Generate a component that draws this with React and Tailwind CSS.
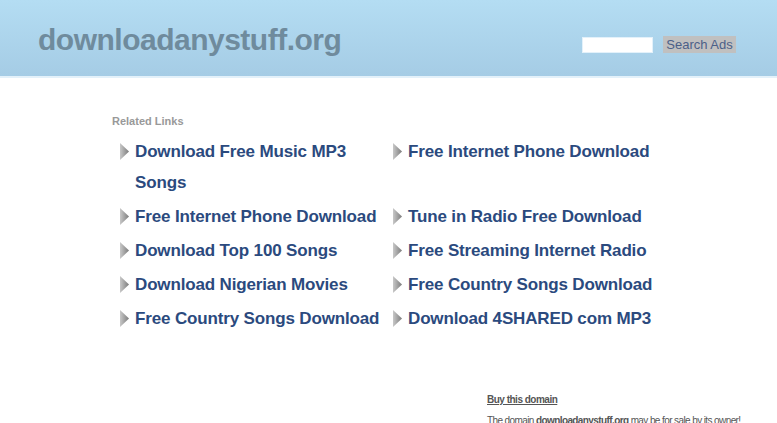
const left = [
  'Download Free Music MP3 Songs',
  'Free Internet Phone Download',
  'Download Top 100 Songs',
  'Download Nigerian Movies',
  'Free Country Songs Download',
];
const right = [
  'Free Internet Phone Download',
  'Tune in Radio Free Download',
  'Free Streaming Internet Radio',
  'Free Country Songs Download',
  'Download 4SHARED com MP3',
];

function Arrow() {
  return (
    <svg width="11" height="17" viewBox="0 0 11 17" className="shrink-0 mt-[7px]">
      <defs>
        <linearGradient id="ag" x1="0" y1="0" x2="1" y2="0">
          <stop offset="0" stopColor="#c8c8c8" />
          <stop offset="1" stopColor="#7c7c7c" />
        </linearGradient>
      </defs>
      <polygon points="1,0 10,8.5 1,17" fill="url(#ag)" />
    </svg>
  );
}

function Item({ text }) {
  return (
    <div className="flex gap-[5px] pl-[7px] mb-[3px]">
      <Arrow />
      <a href="#" className="text-[17px] leading-[31px] font-bold tracking-[-0.15px] text-[#2b4a7e]">{text}</a>
    </div>
  );
}

export default function App() {
  const rows = left.map((l, i) => [l, right[i]]);
  return (
    <div className="w-[777px] h-[423px] overflow-hidden bg-white" style={{ fontFamily: '"Liberation Sans", Arial, sans-serif' }}>
      <div className="h-[78px] bg-gradient-to-b from-[#b4ddf3] to-[#a5cce5] border-b-2 border-[#e3f1fa] flex items-start justify-between">
        <div className="pl-[38px] pt-[20px] text-[30px] leading-[40px] font-bold text-[#6f8b9d] tracking-[-0.5px]">downloadanystuff.org</div>
        <div className="flex items-center gap-[10px] pt-[36px] pr-[41px]">
          <input className="w-[71px] h-[16px] bg-white border border-[#e3f1fa] outline-none" />
          <button className="h-[17px] w-[73px] bg-[#c0c0c0] text-[13px] leading-[17px] text-[#4c5f88]">Search Ads</button>
        </div>
      </div>
      <div className="pl-[112px] pt-[36px]">
        <div className="text-[11px] font-bold text-[#999999] leading-[14px] mb-[8px]">Related Links</div>
        <div className="grid grid-cols-[273px_290px]">
          {rows.map(([l, r], i) => (
            <div key={i} className="contents">
              <Item text={l} />
              <Item text={r} />
            </div>
          ))}
        </div>
      </div>
      <div className="pl-[487px] pt-[56px] text-[#555555]">
        <a href="#" className="text-[10px] font-bold underline tracking-[-0.5px] leading-[14px] block">Buy this domain</a>
        <div className="text-[10px] leading-[13px] mt-[7px] tracking-[-0.6px] whitespace-nowrap">The domain <b>downloadanystuff.org</b> may be for sale by its owner!</div>
      </div>
    </div>
  );
}
